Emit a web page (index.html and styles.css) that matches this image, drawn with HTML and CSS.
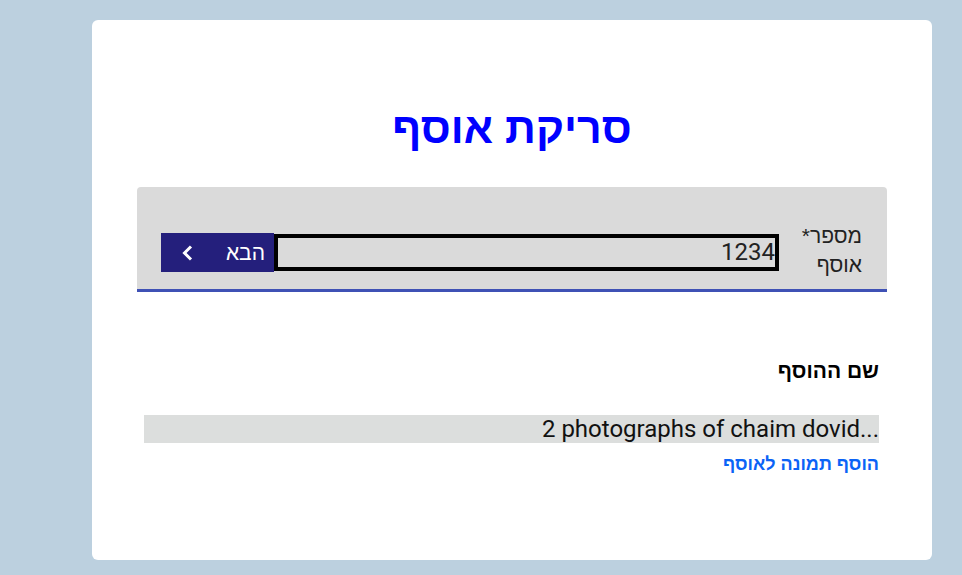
FILE: index.html
```html
<!DOCTYPE html>
<html lang="he" dir="rtl">
<head>
<meta charset="utf-8">
<link rel="stylesheet" href="styles.css">
</head>
<body>
<div class="card">
  <h1 class="title">סריקת אוסף</h1>
  <div class="panel">
    <label class="label">מספר* אוסף</label>
    <div class="input">1234</div>
    <button class="btn"><span>הבא</span><svg class="chev" width="14" height="18" viewBox="0 0 14 18"><path d="M11 2.5 L4.5 9 L11 15.5" fill="none" stroke="#fff" stroke-width="3"/></svg></button>
  </div>
  <div class="details">
    <div class="name-label">שם ההוסף</div>
    <div class="name-value">2 photographs of chaim dovid...</div>
    <a class="add-link" href="#">הוסף תמונה לאוסף</a>
  </div>
</div>
</body>
</html>
```
FILE: styles.css
```css
html, body {
  margin: 0;
  padding: 0;
  background: #bcd0df;
  font-family: Roboto, "Liberation Sans", Arial, sans-serif;
}
body {
  height: 575px;
  overflow: hidden;
}
.card {
  margin: 20px 30px 0 92px;
  width: 840px;
  height: 540px;
  background: #fff;
  border-radius: 6px;
  box-sizing: border-box;
  padding-top: 80px;
}
.title {
  margin: 0;
  text-align: center;
  color: #0000ff;
  font-size: 43px;
  font-weight: bold;
  line-height: 56px;
  font-family: "Liberation Sans", Arial, sans-serif;
}
.panel {
  margin: 31px 45px 0 45px;
  height: 105px;
  box-sizing: border-box;
  background: #dadada;
  border-bottom: 3px solid #3f51b5;
  border-radius: 4px 4px 0 0;
  display: flex;
  align-items: flex-end;
  padding: 0 25px 9px 24px;
}
.label {
  width: 68px;
  font-size: 21px;
  line-height: 29px;
  color: #222;
  margin-left: 15px;
  margin-bottom: 1px;
  font-family: "Liberation Sans", Arial, sans-serif;
}
.input {
  flex: 1;
  height: 29px;
  border: 4px solid #000;
  margin-bottom: 9px;
  font-size: 24px;
  line-height: 29px;
  color: #222;
  padding: 0;
  text-align: right;
  direction: ltr;
}
.btn {
  width: 113px;
  height: 39px;
  margin-bottom: 8px;
  background: #241f7c;
  color: #fff;
  border: 0;
  font-size: 21px;
  font-family: "Liberation Sans", Arial, sans-serif;
  display: flex;
  align-items: center;
  justify-content: space-between;
  padding: 0 9px 0 19px;
}
.chev { display: block; flex: none; }
.details {
  margin: 64px 53px 0 52px;
}
.name-label {
  font-weight: bold;
  font-size: 21px;
  line-height: 30px;
  color: #000;
  font-family: "Liberation Sans", Arial, sans-serif;
}
.name-value {
  margin-top: 29px;
  height: 28px;
  background: #dcdedd;
  font-size: 24px;
  line-height: 28px;
  color: #111;
  direction: ltr;
  text-align: right;
}
.add-link {
  display: block;
  margin-top: 11px;
  color: #0b63f6;
  font-weight: bold;
  font-size: 18px;
  text-decoration: none;
  font-family: "Liberation Sans", Arial, sans-serif;
}
```
